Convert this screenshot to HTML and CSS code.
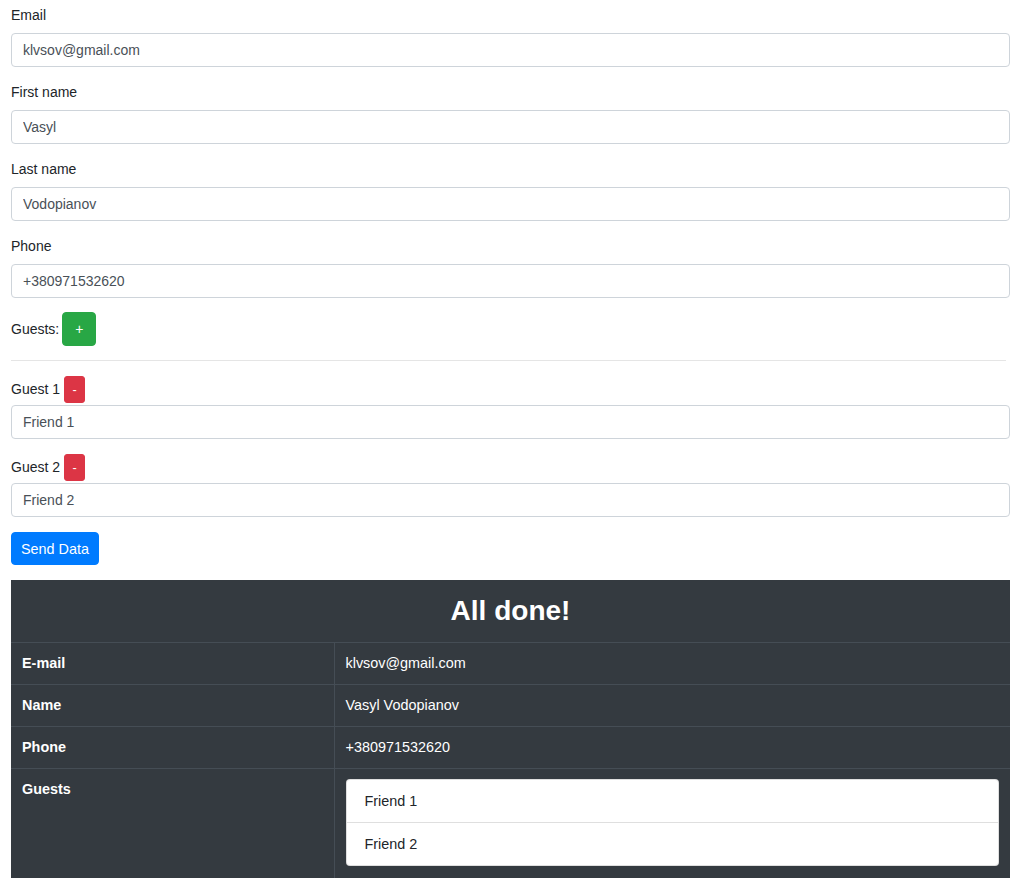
FILE: index.html
```html
<!DOCTYPE html>
<html>
<head>
<meta charset="utf-8">
<link rel="stylesheet" href="styles.css">
</head>
<body>
<div class="page">
  <div class="group">
    <label class="lbl">Email</label>
    <input class="field" value="klvsov@gmail.com">
  </div>
  <div class="group">
    <label class="lbl">First name</label>
    <input class="field" value="Vasyl">
  </div>
  <div class="group">
    <label class="lbl">Last name</label>
    <input class="field" value="Vodopianov">
  </div>
  <div class="group group-last">
    <label class="lbl">Phone</label>
    <input class="field" value="+380971532620">
  </div>
  <div class="guests-row">
    <span class="lbl-inline">Guests:</span>
    <button class="btn btn-add">+</button>
  </div>
  <hr class="sep">
  <div class="group">
    <div class="guest-label"><span>Guest 1</span><button class="btn btn-del">-</button></div>
    <input class="field" value="Friend 1">
  </div>
  <div class="group">
    <div class="guest-label"><span>Guest 2</span><button class="btn btn-del">-</button></div>
    <input class="field" value="Friend 2">
  </div>
  <button class="btn btn-send">Send Data</button>
  <table class="result">
    <tr><th colspan="2" class="title">All done!</th></tr>
    <tr><th class="key">E-mail</th><td>klvsov@gmail.com</td></tr>
    <tr><th class="key">Name</th><td>Vasyl Vodopianov</td></tr>
    <tr><th class="key">Phone</th><td>+380971532620</td></tr>
    <tr><th class="key">Guests</th><td class="list-cell">
      <ul class="list">
        <li>Friend 1</li>
        <li>Friend 2</li>
      </ul>
    </td></tr>
  </table>
</div>
</body>
</html>
```
FILE: styles.css
```css
* { box-sizing: border-box; }
html, body { margin: 0; padding: 0; background: #fff; }
body {
  font-family: "Segoe UI", "Liberation Sans", Arial, sans-serif;
  font-size: 14px;
  line-height: 1.5;
  color: #212529;
}
.page { padding: 6px 4px 0 11px; }
.group { margin-bottom: 15px; }
.group-last { margin-bottom: 14px; }
.lbl { display: block; line-height: 19px; margin-bottom: 8px; }
.field {
  display: block;
  width: 100%;
  height: 34px;
  padding: 0 11px;
  font: inherit;
  color: #495057;
  border: 1px solid #ced4da;
  border-radius: 4px;
  background: #fff;
}
.group + .group .lbl { line-height: 20px; }
.guests-row { display: flex; align-items: center; height: 34px; }
.lbl-inline { margin-right: 3px; }
.btn {
  border: 1px solid transparent;
  border-radius: 4px;
  color: #fff;
  font-family: inherit;
  cursor: pointer;
}
.btn-add {
  background: #28a745;
  border-color: #28a745;
  width: 34px;
  height: 34px;
  font-size: 14px;
  padding: 0;
}
.sep {
  border: 0;
  border-top: 1px solid rgba(0,0,0,.1);
  margin: 14px 4px 15px 0;
}
.guest-label { display: flex; align-items: center; height: 27px; margin-bottom: 2px; }
.btn-del {
  background: #dc3545;
  border-color: #dc3545;
  width: 21px;
  height: 27px;
  margin-left: 4px;
  padding: 0;
  font-size: 12.6px;
  border-radius: 3px;
}
.btn-send {
  display: block;
  background: #007bff;
  border-color: #007bff;
  height: 33px;
  width: 88px;
  padding: 0;
  font-size: 14.4px;
  margin-bottom: 15px;
}
.result {
  width: 999px;
  border-collapse: collapse;
  background: #343a40;
  color: #fff;
}
.result th, .result td {
  border-top: 1px solid #454d55;
  padding: 10px 11px;
  text-align: left;
  vertical-align: top;
  line-height: 21px;
  font-size: 14.4px;
}
.result td { border-left: 1px solid #454d55; }
.result td.list-cell { padding-bottom: 12px; }
.result th.title {
  text-align: center;
  font-size: 28px;
  line-height: 42px;
  padding: 10px;
  border-top: 0;
}
.result th.key { width: 323px; font-weight: bold; }
.list {
  list-style: none;
  margin: 0;
  padding: 0;
  background: #fff;
  border-radius: 4px;
  color: #212529;
  border: 1px solid rgba(0,0,0,.125);
}
.list li { padding: 11px 18px 10px; line-height: 21px; }
.list li + li { border-top: 1px solid rgba(0,0,0,.125); }
```
